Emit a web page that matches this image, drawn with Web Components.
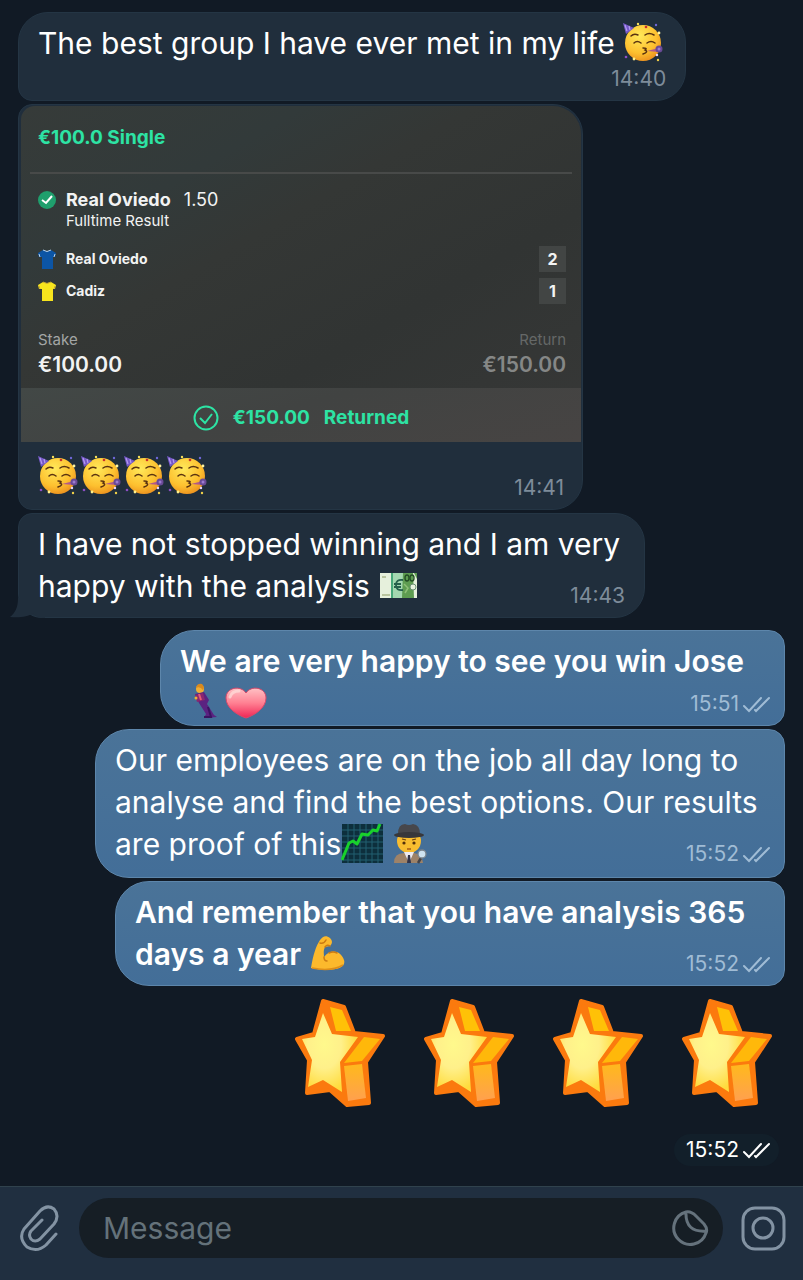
<!DOCTYPE html>
<html lang="en">
<head>
<meta charset="utf-8">
<meta name="viewport" content="width=device-width, initial-scale=1">
<title>Chat</title>
<style>
  * { box-sizing: border-box; }

  body {
    margin: 0;
    background: #111a25;
    font-family: Inter, "Liberation Sans", sans-serif;
    color: #fff;
  }
</style>
</head>
<body>
<chat-screen>
  <chat-message time="14:40" stacked>The best group I have ever met in my life <chat-emoji name="party"></chat-emoji></chat-message>

  <chat-message time="14:41" media>
    <bet-slip slot="media" heading="€100.0 Single" pick="Real Oviedo" odds="1.50" market="Fulltime Result"
      home="Real Oviedo" home-score="2" away="Cadiz" away-score="1"
      stake="€100.00" payout="€150.00"></bet-slip>
    <chat-emoji name="party"></chat-emoji><chat-emoji name="party"></chat-emoji><chat-emoji name="party"></chat-emoji><chat-emoji name="party"></chat-emoji>
  </chat-message>

  <chat-message time="14:43" tail style="--max: 627px">I have not stopped winning and I am very happy with the analysis <chat-emoji name="euro"></chat-emoji></chat-message>

  <chat-message time="15:51" out bold short style="--max: 625px">We are very happy to see you win Jose <chat-emoji name="dancer"></chat-emoji><chat-emoji name="heart"></chat-emoji></chat-message>

  <chat-message time="15:52" out roomy style="--max: 690px">Our employees are on the job all day long to analyse and find the best options. Our results are proof of this<chat-emoji name="chart"></chat-emoji> <chat-emoji name="detective"></chat-emoji></chat-message>

  <chat-message time="15:52" out bold style="--max: 670px">And remember that you have analysis 365 days a year <chat-emoji name="muscle"></chat-emoji></chat-message>

  <chat-stars time="15:52" count="4"></chat-stars>

  <chat-composer slot="footer" placeholder="Message"></chat-composer>
</chat-screen>

<script>
const EMOJI = {
  party: {
    label: "Partying face", w: 43, h: 40,
    svg: `
      <defs>
        <radialGradient id="g" cx=".4" cy=".3" r=".8">
          <stop offset="0" stop-color="#ffe95a"/><stop offset=".6" stop-color="#fdc02f"/><stop offset="1" stop-color="#e8851a"/>
        </radialGradient>
      </defs>
      <circle cx="20" cy="21" r="18" fill="url(#g)"/>
      <path d="M0 1 L11 6 L3 12Z" fill="#7659c9"/>
      <path d="M2 3 L4 9 M6 4 L7 8" stroke="#b39bf0" stroke-width="1.2"/>
      <g fill="none" stroke="#5a3310" stroke-width="1.5" stroke-linecap="round">
        <path d="M8 14 Q11 11 15 13 M22 13 Q26 10 31 13"/>
        <path d="M11 21 Q14 18 18 21 M24 21 Q28 18 32 21"/>
        <path d="M20 26 Q25 26 22 28 Q26 30 20 32"/>
      </g>
      <path d="M24 29 L36 26 L36 30Z" fill="#b0588b"/>
      <circle cx="36" cy="27" r="3.5" fill="#6a4a96"/>
      <circle cx="36" cy="27" r="1.5" fill="#9c7bd0"/>
      <g>
        <circle cx="15" cy="2" r="1.2" fill="#f6e05a"/><circle cx="23" cy="5" r="1.3" fill="#c8302b"/>
        <circle cx="33" cy="3" r="1.2" fill="#6f67d8"/><circle cx="36" cy="11" r="1.4" fill="#fff3a0"/>
        <circle cx="3" cy="35" r="1.3" fill="#8b4fc4"/><circle cx="11" cy="37" r="1.4" fill="#fff08a"/>
        <circle cx="34" cy="33" r="1.2" fill="#ecd5ff"/><circle cx="35" cy="38" r="1.2" fill="#f0d04a"/>
      </g>`
  },
  euro: {
    label: "Euro banknote", w: 40, h: 28,
    svg: `
      <rect x="2" y="2" width="37" height="25" fill="#e6f0dc"/>
      <rect x="15" y="2" width="10" height="25" fill="#a4d8b0"/>
      <rect x="13" y="2" width="2" height="25" fill="#47a879"/>
      <path d="M25 2 H35 L36 27 H24Z" fill="#5d9c50"/>
      <path d="M36 2 L39 2 V8Z" fill="#5d9c50"/>
      <path d="M4 24 H12 M4 6 H8" stroke="#b9c59f" stroke-width="2"/>
      <path d="M25 9 Q18 8 18 14 Q18 20 25 19 M16 13 H23 M16 16 H23" fill="none" stroke="#25604b" stroke-width="1.8"/>
      <ellipse cx="29" cy="7" rx="2" ry="3" fill="none" stroke="#244f25" stroke-width="1.4"/>
      <ellipse cx="34" cy="7" rx="2" ry="3" fill="none" stroke="#244f25" stroke-width="1.4"/>
      <circle cx="35" cy="16" r="3" fill="#e9f3df" stroke="#6b8f75"/>
      <path d="M26 13 L30 17 L27 22" fill="none" stroke="#8ec077" stroke-width="1.5"/>`
  },
  dancer: {
    label: "Man dancing", w: 45, h: 38,
    svg: `
      <circle cx="20" cy="6" r="4" fill="#efae35"/>
      <path d="M16 5 Q17 0 22 1 Q25 4 23 7 Q20 3 16 5Z" fill="#d98a1e"/>
      <path d="M15 11 L24 9 L29 17 L27 21 L34 32 L37 34 L24 35 L26 31 L19 20Z" fill="#5b2281"/>
      <path d="M15 12 L17 19 L25 17 L23 10Z" fill="#8b276e"/>
      <path d="M19 11 L21 17" stroke="#e55b74" stroke-width="2"/>
      <path d="M28 24 L31 34 H24" stroke="#3b1361" stroke-width="2" fill="none"/>
      <circle cx="16" cy="15" r="1.5" fill="#efae35"/>`
  },
  heart: {
    label: "Red heart", w: 42, h: 33,
    svg: `
      <defs>
        <linearGradient id="g" x2="0" y2="1">
          <stop offset="0" stop-color="#ffc1c4"/><stop offset=".5" stop-color="#ff8092"/><stop offset="1" stop-color="#f02555"/>
        </linearGradient>
      </defs>
      <path d="M21 32 C12 29 1 22 1 12 C1 1 16 -1 21 7 C26 -1 41 1 41 12 C41 22 30 29 21 32Z" fill="url(#g)" stroke="#d9486a"/>
      <path d="M5 11 Q7 5 14 5" stroke="#ffdfdc" stroke-width="3" fill="none" stroke-linecap="round" opacity=".7"/>`
  },
  chart: {
    label: "Chart increasing", w: 43, h: 42,
    svg: `
      <rect x="1" y="2" width="41" height="39" fill="#0d2f3c"/>
      <path d="M7 2V41M13 2V41M19 2V41M25 2V41M31 2V41M37 2V41M1 8H42M1 14H42M1 20H42M1 26H42M1 32H42M1 38H42" stroke="#226070"/>
      <path d="M1 38 L8 21 L12 19 L16 22 L21 12 L27 13 L32 8 L36 9 L39 2" fill="none" stroke="#19d12c" stroke-width="3" stroke-linejoin="round"/>`
  },
  detective: {
    label: "Detective", w: 34, h: 42,
    svg: `
      <circle cx="16" cy="19" r="12" fill="#f8bd30"/>
      <path d="M1 41 Q1 31 11 31 H21 Q29 32 30 41Z" fill="#9d8268"/>
      <path d="M11 30 L16 41 L21 30Z" fill="#eceaf0"/>
      <path d="M15 33 H17 L18 41 H14Z" fill="#323348"/>
      <path d="M5 12 Q5 2 12 2 Q16 4 20 2 Q27 3 27 12Z" fill="#47474b"/>
      <ellipse cx="16" cy="13" rx="15" ry="3" fill="#37373b"/>
      <path d="M9 17 L13 18 M19 18 L23 17" stroke="#694013" stroke-width="1.2"/>
      <circle cx="11" cy="21" r="1.6" fill="#53300c"/><circle cx="21" cy="21" r="1.6" fill="#53300c"/>
      <path d="M14 27 H18" stroke="#a55b14" stroke-width="1.5"/>
      <path d="M28 36 L25 41" stroke="#434348" stroke-width="2.5"/>
      <circle cx="29" cy="32" r="4" fill="#cee2ef" stroke="#79838c" stroke-width="1.3"/>`
  },
  muscle: {
    label: "Flexed biceps", w: 38, h: 36,
    svg: `
      <path d="M2 33 C4 20 7 11 11 5 C14 1 17 0 21 3 Q25 7 21 11 L16 12 C14 16 15 19 15 22 C22 13 32 16 35 25 C38 35 20 37 2 33Z" fill="#fcb92c"/>
      <path d="M15 22 Q15 26 18 26 M11 8 Q15 9 17 5 M16 12 Q18 9 21 11 M20 18 Q24 16 28 18" fill="none" stroke="#cc7b13" stroke-width="1.5" stroke-linecap="round"/>
      <path d="M3 33 Q22 37 34 30" fill="none" stroke="#dd8e19" stroke-width="1.5"/>`
  },
};

const TICKS = `
  <svg class="ticks" width="27" height="17" viewBox="0 0 27 17" fill="none" stroke="currentColor" stroke-width="2" stroke-linecap="round" role="img" aria-label="Read">
    <path d="M1 10 L6 15 L18 2 M12 14 L13 15 L26 2"/>
  </svg>`;

class ChatEmoji extends HTMLElement {
  constructor() {
    super();
    this.attachShadow({ mode: "open" });
  }

  connectedCallback() {
    const e = EMOJI[this.getAttribute("name")];
    this.shadowRoot.innerHTML = `
      <style>
        :host { display: inline-block; height: 24px; vertical-align: baseline; line-height: 0; }
        svg { display: block; margin-top: ${Math.round((24 - e.h) / 2)}px; }
      </style>
      <svg width="${e.w}" height="${e.h}" viewBox="0 0 ${e.w} ${e.h}" role="img" aria-label="${e.label}">${e.svg}</svg>
    `;
  }
}

class ChatMessage extends HTMLElement {
  constructor() {
    super();
    this.attachShadow({ mode: "open" });
  }

  connectedCallback() {
    const out = this.hasAttribute("out");
    this.shadowRoot.innerHTML = `
      <style>
        *, *::before, *::after { box-sizing: border-box; }

        :host {
          display: block;
          position: relative;
          align-self: flex-start;
          max-width: min(100%, var(--max, 100%));
          background: #202e3c;
          border: 1px solid #243544;
          border-radius: 14px 30px 30px 14px;
          font-size: 30px;
          line-height: 42px;
        }
        :host([media]) { width: 565px; padding: 1px; }
        :host([tail]) { border-bottom-left-radius: 24px; margin-bottom: 9px; }
        :host([out]) {
          align-self: flex-end;
          background: linear-gradient(#4a7398, #436e98);
          border-color: #5d86ab;
          border-radius: 34px 16px 16px 34px;
        }
        :host([stacked]) { border-top-left-radius: 30px; }
        :host([bold]) { font-weight: 600; }

        /* text and time share one cell, the time sits in its corner */
        .body { display: grid; padding: 9px 19px 10px; }
        .text, .meta { grid-area: 1 / 1; }
        .meta {
          place-self: end;
          display: flex;
          align-items: center;
          gap: 4px;
          font-size: 21px;
          font-weight: 400;
          line-height: 22px;
          color: #7e8c9a;
        }
        :host([stacked]) .meta { grid-area: 2 / 1; margin-top: 4px; }
        :host([media]) .body { padding: 13px 17px 9px 18px; }
        :host([media]) .text { padding-bottom: 2px; }
        :host([out]) .meta { color: #a0bcd5; margin-right: -5px; }
        :host([short]) .text { margin-bottom: -9px; }
        :host([roomy]) .body { padding-bottom: 12px; }

        .tail { position: absolute; left: -9px; bottom: -1px; fill: #202e3c; }
      </style>
      <slot name="media"></slot>
      <div class="body">
        <div class="text"><slot></slot></div>
        <div class="meta"><time>${this.getAttribute("time")}</time>${out ? TICKS : ""}</div>
      </div>
      ${this.hasAttribute("tail") ? `
      <svg class="tail" width="35" height="20" viewBox="0 0 35 20" aria-hidden="true">
        <path d="M8 0 C8 10 5 15 0 19 C9 20 18 19 23 15 C27 19 30 20 35 20 V0Z"/>
      </svg>` : ""}
    `;
  }
}

class BetSlip extends HTMLElement {
  constructor() {
    super();
    this.attachShadow({ mode: "open" });
  }

  connectedCallback() {
    const v = (name) => this.getAttribute(name) || "";
    const shirt = (fill, trim) => `
      <svg width="18" height="22" viewBox="0 0 18 22" aria-hidden="true">
        <path d="M5 2 L0 5 L1 9 L4 9 V21 H15 V9 L17 9 L18 5 L13 2 Q9 4 5 2Z" fill="${fill}"/>
        <path d="M5 2 Q9 5 13 2 M1 6 L2 9 M17 6 L16 9" fill="none" stroke="${trim}"/>
      </svg>`;

    this.shadowRoot.innerHTML = `
      <style>
        *, *::before, *::after { box-sizing: border-box; }

        :host {
          display: block;
          overflow: hidden;
          margin: 0 0 0 1px;
          border-radius: 14px 28px 0 0;
          background: linear-gradient(150deg, #363b39, #323a3a 25%, #343735 40%, #313433 65%, #373837);
          font-size: 15px;
          line-height: 20px;
          color: #f2f3f3;
        }

        h2 {
          margin: 0 9px;
          padding: 21px 8px 23px;
          font-size: 19px;
          font-weight: 700;
          line-height: 22px;
          color: #2de3a4;
          border-bottom: 2px solid #484a49;
        }

        .pick, .team {
          display: grid;
          grid-template-columns: 19px 1fr auto;
          column-gap: 9px;
          align-items: center;
          padding: 0 15px 0 17px;
        }
        .pick { padding-top: 14px; padding-bottom: 16px; }
        .pick svg { grid-row: 1; }
        .pick div { font-size: 18px; line-height: 24px; }
        .pick b { font-weight: 700; margin-right: 8px; }
        .pick small { grid-column: 2; font-size: 15px; line-height: 18px; }

        .team { height: 26px; margin-bottom: 6px; font-size: 14px; font-weight: 700; }
        .score {
          width: 27px;
          background: #424544;
          font-size: 16px;
          line-height: 26px;
          text-align: center;
        }

        .totals { display: flex; justify-content: space-between; padding: 20px 15px 8px 17px; }
        .totals dl { margin: 0; }
        .totals dt { color: #a3a6a5; }
        .totals dd { margin: 0; font-size: 21px; font-weight: 600; line-height: 30px; }
        .won { text-align: right; }
        .won dt { color: #656867; }
        .won dd { color: #858786; }

        .result {
          display: flex;
          align-items: center;
          justify-content: center;
          gap: 14px;
          height: 54px;
          padding-top: 6px;
          background: linear-gradient(165deg, #424846, #414342 45%, #474443);
          font-size: 19px;
          font-weight: 700;
          color: #2de3a4;
        }
      </style>

      <h2>${v("heading")}</h2>
      <div class="pick">
        <svg width="18" height="18" viewBox="0 0 18 18" role="img" aria-label="Won">
          <circle cx="9" cy="9" r="9" fill="#1f9f6d"/>
          <path d="M4 9 L8 12 L14 5" fill="none" stroke="#fff" stroke-width="2"/>
        </svg>
        <div><b>${v("pick")}</b> ${v("odds")}</div>
        <small>${v("market")}</small>
      </div>
      <div class="team">${shirt("#0c55a5", "#b9d4ee")}<span>${v("home")}</span><span class="score">${v("home-score")}</span></div>
      <div class="team">${shirt("#f7e51d", "#c7a735")}<span>${v("away")}</span><span class="score">${v("away-score")}</span></div>
      <div class="totals">
        <dl><dt>Stake</dt><dd>${v("stake")}</dd></dl>
        <dl class="won"><dt>Return</dt><dd>${v("payout")}</dd></dl>
      </div>
      <div class="result">
        <svg width="26" height="26" viewBox="0 0 26 26" fill="none" stroke="currentColor" stroke-width="2" aria-hidden="true">
          <circle cx="13" cy="13" r="11.5"/>
          <path d="M7 13 L12 18 L19 9"/>
        </svg>
        <span>${v("payout")}</span><span>Returned</span>
      </div>
    `;
  }
}

class ChatStars extends HTMLElement {
  constructor() {
    super();
    this.attachShadow({ mode: "open" });
  }

  connectedCallback() {
    const star = `
      <svg width="92" height="110" viewBox="0 0 92 110" role="img" aria-label="Star">
        <defs>
          <radialGradient id="face" cx=".4" cy=".4" r=".6">
            <stop offset="0" stop-color="#fff98c"/><stop offset=".5" stop-color="#fff08a"/><stop offset="1" stop-color="#ffdb3c"/>
          </radialGradient>
          <linearGradient id="side" x2="0" y2="1">
            <stop offset="0" stop-color="#ffb91c"/><stop offset="1" stop-color="#ffa04f"/>
          </linearGradient>
        </defs>
        <path d="M29 3 L50 9 L60 35 L89 38 L72 64 L75 105 L53 107 L36 92 L13 95 L15 62 L3 41 L20 36Z" fill="#fb7a0e" stroke="#fb7a0e" stroke-width="4" stroke-linejoin="round"/>
        <path d="M29 15 L38 36 L64 39 L46 64 L48 94 L29 82 L14 89 L18 62 L8 41 L21 39Z" fill="url(#face)"/>
        <path d="M36 9 L48 12 L57 33 L42 33Z" fill="#ffc107"/>
        <path d="M70 39 L86 41 L68 63 L50 65Z" fill="#ffb80a"/>
        <path d="M50 68 L68 66 L72 100 L54 103Z" fill="url(#side)"/>
      </svg>`;

    this.shadowRoot.innerHTML = `
      <style>
        :host {
          display: flex;
          flex-direction: column;
          align-items: flex-end;
          gap: 26px;
          padding: 9px 6px 0 0;
        }
        .row { display: flex; gap: 37px; padding-right: 6px; }
        .meta {
          display: flex;
          align-items: center;
          gap: 4px;
          padding: 5px 9px 5px 12px;
          border-radius: 16px;
          background: #121f2a;
          font-size: 21px;
          line-height: 22px;
          color: #fff;
        }
      </style>
      <div class="row">${star.repeat(Number(this.getAttribute("count")) || 1)}</div>
      <div class="meta"><time>${this.getAttribute("time")}</time>${TICKS}</div>
    `;
  }
}

class ChatComposer extends HTMLElement {
  constructor() {
    super();
    this.attachShadow({ mode: "open" });
  }

  connectedCallback() {
    const placeholder = this.getAttribute("placeholder") || "";
    this.shadowRoot.innerHTML = `
      <style>
        *, *::before, *::after { box-sizing: border-box; }

        :host { display: block; background: #202f40; border-top: 1px solid #30424d; }

        form {
          display: flex;
          align-items: center;
          gap: 17px;
          padding: 11px 17px 22px 18px;
        }

        button {
          display: block;
          padding: 0;
          border: 0;
          background: transparent;
          color: #8393a3;
          cursor: pointer;
        }
        svg { display: block; }

        .field {
          flex: 1;
          min-width: 0;
          display: flex;
          align-items: center;
          height: 60px;
          padding: 0 14px 0 24px;
          border-radius: 30px;
          background: #161e25;
        }
        .field button { color: #65727c; }

        input {
          flex: 1;
          min-width: 0;
          padding: 0;
          border: 0;
          outline: none;
          background: transparent;
          font: inherit;
          font-size: 30px;
          color: #fff;
        }
        input::placeholder { color: #64727a; opacity: 1; }
      </style>
      <form>
        <button type="button" aria-label="Attach file">
          <svg width="44" height="48" viewBox="0 0 44 48" fill="none" stroke="currentColor" stroke-width="3" stroke-linecap="round" stroke-linejoin="round">
            <path d="M38 30 L28 41 Q19 49 9 43 Q0 34 6 25 L22 7 Q29 0 36 5 Q42 12 36 20 L22 35 Q17 39 13 35 Q10 31 13 27 L24 16"/>
          </svg>
        </button>
        <div class="field">
          <input type="text" aria-label="${placeholder}" placeholder="${placeholder}">
          <button type="button" aria-label="Stickers">
            <svg width="38" height="38" viewBox="0 0 38 38" fill="none" stroke="currentColor" stroke-width="3" stroke-linejoin="round">
              <path d="M15 3 A16.5 16.5 0 1 0 35 24 Q37 20 33 15 L25 7 Q20 2 15 3Z M15 3 Q14 24 36 22"/>
            </svg>
          </button>
        </div>
        <button type="button" aria-label="Record video">
          <svg width="46" height="46" viewBox="0 0 46 46" fill="none" stroke="currentColor" stroke-width="3">
            <rect x="3" y="3" width="41" height="41" rx="12"/>
            <circle cx="23" cy="23" r="10"/>
          </svg>
        </button>
      </form>
    `;
  }
}

class ChatScreen extends HTMLElement {
  constructor() {
    super();
    this.attachShadow({ mode: "open" });
    this.shadowRoot.innerHTML = `
      <style>
        :host { display: flex; flex-direction: column; min-height: 100vh; }
        main {
          flex: 1;
          display: flex;
          flex-direction: column;
          gap: 3px;
          padding: 12px 18px;
        }
      </style>
      <main><slot></slot></main>
      <slot name="footer"></slot>
    `;
  }
}

customElements.define("chat-emoji", ChatEmoji);
customElements.define("chat-message", ChatMessage);
customElements.define("bet-slip", BetSlip);
customElements.define("chat-stars", ChatStars);
customElements.define("chat-composer", ChatComposer);
customElements.define("chat-screen", ChatScreen);
</script>
</body>
</html>
